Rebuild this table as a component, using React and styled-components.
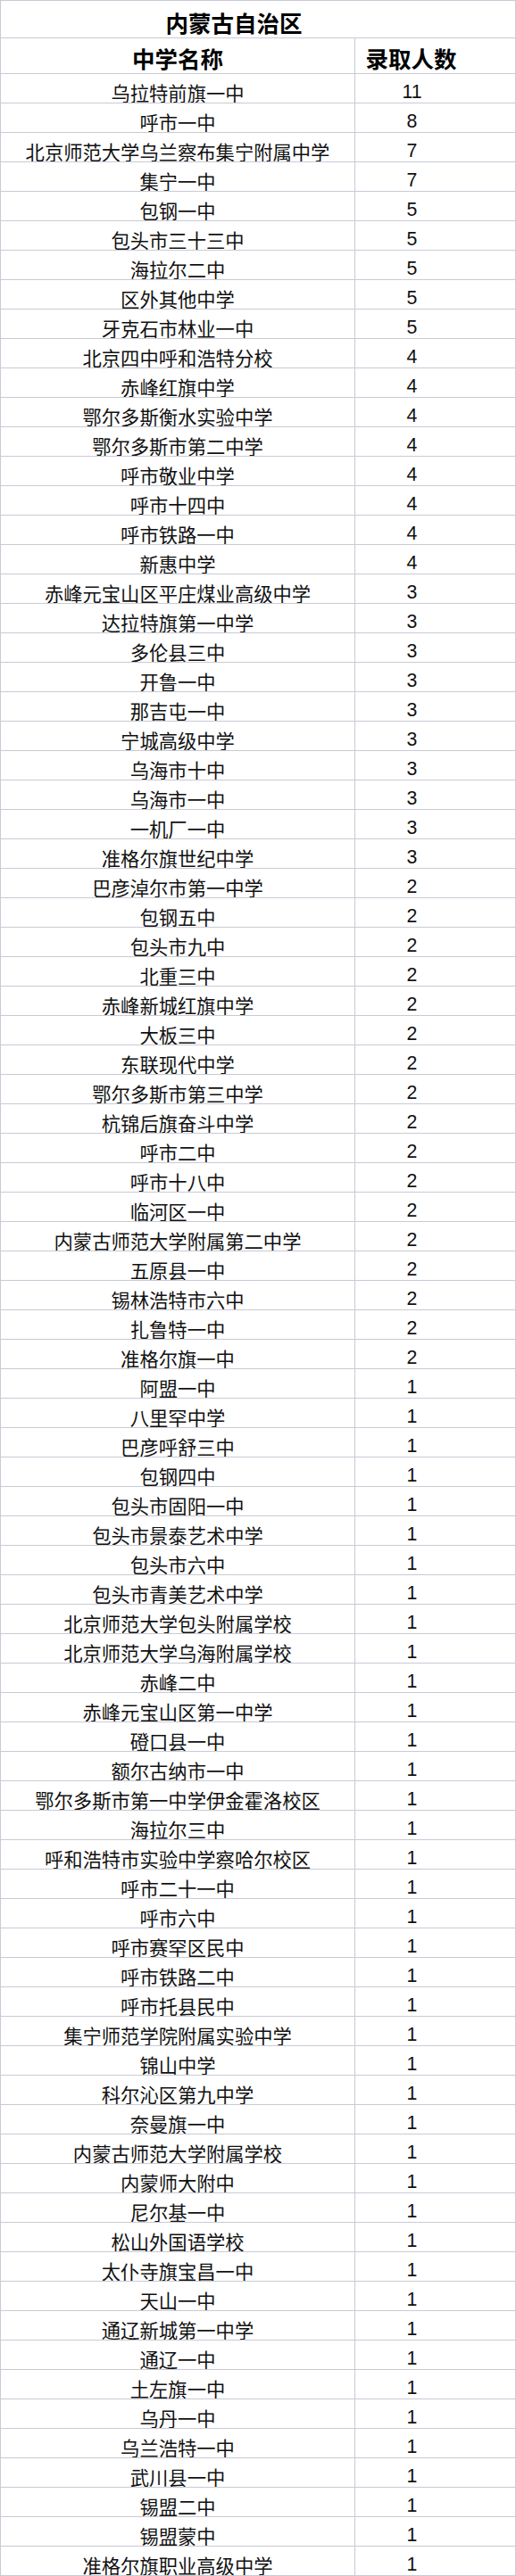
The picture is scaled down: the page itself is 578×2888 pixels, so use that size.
import React from "react";
import styled, { createGlobalStyle } from "styled-components";

const GlobalStyle = createGlobalStyle`
  html, body { margin: 0; padding: 0; background: #ffffff; }
  body { font-family: "Liberation Sans", "Noto Sans CJK SC", sans-serif; color: #111; }
`;

const rows = [
  ["乌拉特前旗一中", 11], ["呼市一中", 8], ["北京师范大学乌兰察布集宁附属中学", 7], ["集宁一中", 7],
  ["包钢一中", 5], ["包头市三十三中", 5], ["海拉尔二中", 5], ["区外其他中学", 5], ["牙克石市林业一中", 5],
  ["北京四中呼和浩特分校", 4], ["赤峰红旗中学", 4], ["鄂尔多斯衡水实验中学", 4], ["鄂尔多斯市第二中学", 4],
  ["呼市敬业中学", 4], ["呼市十四中", 4], ["呼市铁路一中", 4], ["新惠中学", 4],
  ["赤峰元宝山区平庄煤业高级中学", 3], ["达拉特旗第一中学", 3], ["多伦县三中", 3], ["开鲁一中", 3],
  ["那吉屯一中", 3], ["宁城高级中学", 3], ["乌海市十中", 3], ["乌海市一中", 3], ["一机厂一中", 3],
  ["准格尔旗世纪中学", 3], ["巴彦淖尔市第一中学", 2], ["包钢五中", 2], ["包头市九中", 2], ["北重三中", 2],
  ["赤峰新城红旗中学", 2], ["大板三中", 2], ["东联现代中学", 2], ["鄂尔多斯市第三中学", 2],
  ["杭锦后旗奋斗中学", 2], ["呼市二中", 2], ["呼市十八中", 2], ["临河区一中", 2],
  ["内蒙古师范大学附属第二中学", 2], ["五原县一中", 2], ["锡林浩特市六中", 2], ["扎鲁特一中", 2],
  ["准格尔旗一中", 2], ["阿盟一中", 1], ["八里罕中学", 1], ["巴彦呼舒三中", 1], ["包钢四中", 1],
  ["包头市固阳一中", 1], ["包头市景泰艺术中学", 1], ["包头市六中", 1], ["包头市青美艺术中学", 1],
  ["北京师范大学包头附属学校", 1], ["北京师范大学乌海附属学校", 1], ["赤峰二中", 1],
  ["赤峰元宝山区第一中学", 1], ["磴口县一中", 1], ["额尔古纳市一中", 1],
  ["鄂尔多斯市第一中学伊金霍洛校区", 1], ["海拉尔三中", 1], ["呼和浩特市实验中学察哈尔校区", 1],
  ["呼市二十一中", 1], ["呼市六中", 1], ["呼市赛罕区民中", 1], ["呼市铁路二中", 1], ["呼市托县民中", 1],
  ["集宁师范学院附属实验中学", 1], ["锦山中学", 1], ["科尔沁区第九中学", 1], ["奈曼旗一中", 1],
  ["内蒙古师范大学附属学校", 1], ["内蒙师大附中", 1], ["尼尔基一中", 1], ["松山外国语学校", 1],
  ["太仆寺旗宝昌一中", 1], ["天山一中", 1], ["通辽新城第一中学", 1], ["通辽一中", 1], ["土左旗一中", 1],
  ["乌丹一中", 1], ["乌兰浩特一中", 1], ["武川县一中", 1], ["锡盟二中", 1], ["锡盟蒙中", 1],
  ["准格尔旗职业高级中学", 1],
];

const LINE = "#c9cad6";

const Sheet = styled.div`
  width: 578px;
  box-sizing: border-box;
  display: grid;
  grid-template-columns: 397px 180px;
  border-top: 1px solid ${LINE};
  border-left: 1px solid ${LINE};
`;

const Cell = styled.div`
  box-sizing: border-box;
  display: flex;
  align-items: center;
  justify-content: center;
  border-right: 1px solid ${LINE};
  border-bottom: 1px solid ${LINE};
  white-space: nowrap;
  overflow: hidden;
`;

const TitleCell = styled(Cell)`
  grid-column: 1 / span 2;
  height: 42px;
  padding: 6px 54px 0 0;
  font-size: 25.5px;
  font-weight: 700;
  color: #000;
`;

const HeadCell = styled(Cell)`
  height: 40px;
  padding: 4px ${(p) => (p.$num ? "54px" : "0")} 0 0;
  font-size: 25.5px;
  font-weight: 700;
  color: #000;
`;

const DataCell = styled(Cell)`
  height: 33px;
  padding: 8px ${(p) => (p.$num ? "52px" : "0")} 0 0;
  font-size: 21.3px;
  font-weight: 400;
  color: #111;
`;

export default function App() {
  return (
    <>
      <GlobalStyle />
      <Sheet>
        <TitleCell>内蒙古自治区</TitleCell>
        <HeadCell>中学名称</HeadCell>
        <HeadCell $num>录取人数</HeadCell>
        {rows.map(([name, n], i) => (
          <React.Fragment key={i}>
            <DataCell>{name}</DataCell>
            <DataCell $num>{n}</DataCell>
          </React.Fragment>
        ))}
      </Sheet>
    </>
  );
}
